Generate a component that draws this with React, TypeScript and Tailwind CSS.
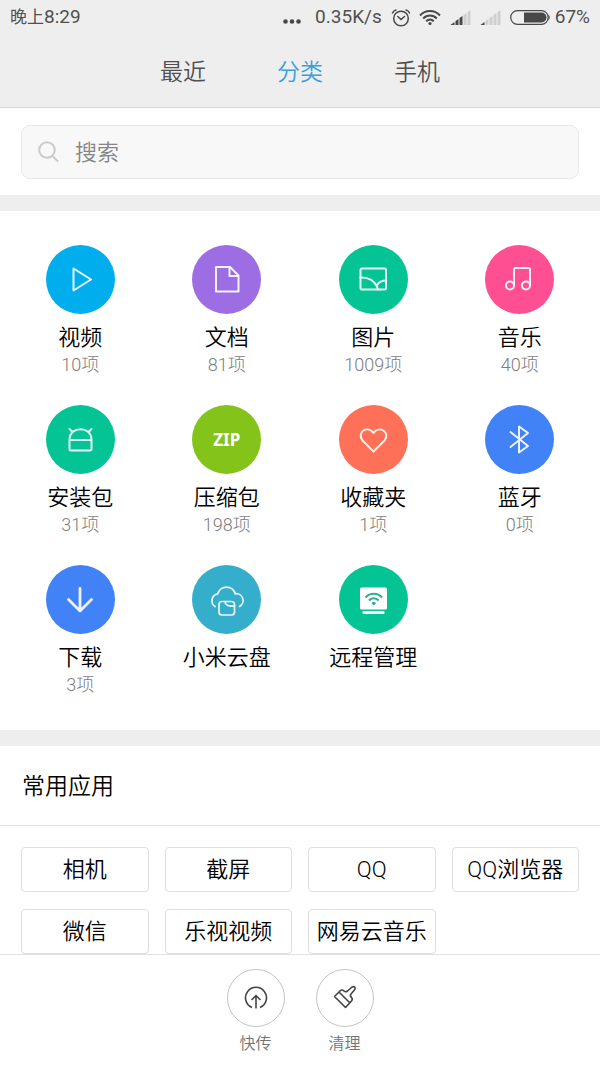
import { useState, type ReactNode } from "react";

type Category = {
  name: string;
  count?: string;
  color: string;
  icon: ReactNode;
};

// every category icon is drawn on the 69x69 disc
const categories: Category[] = [
  {
    name: "视频",
    count: "10项",
    color: "bg-[#00aeee]",
    icon: <path d="M27.500 23.500V45.500L45 34.500Z" />,
  },
  {
    name: "文档",
    count: "81项",
    color: "bg-[#9d6de4]",
    icon: <path d="M24 22H38L46.500 30.500V46.500H24ZM37.500 22V31H46.500" />,
  },
  {
    name: "图片",
    count: "1009项",
    color: "bg-[#04c495]",
    icon: (
      <>
        <rect x="21.500" y="23.500" width="25.500" height="21" rx="1.500" />
        <path d="M21.500 32.500C29 32 36.500 35.500 39 44.500M38 40C40 37 43 35.500 47 35.500" />
      </>
    ),
  },
  {
    name: "音乐",
    count: "40项",
    color: "bg-[#ff4f93]",
    icon: (
      <>
        <circle cx="25" cy="40.500" r="4" />
        <circle cx="41" cy="40.500" r="4" />
        <path d="M29 40.500V24.500Q29 23 30.500 23H43.500Q45 23 45 24.500V40.500" />
      </>
    ),
  },
  {
    name: "安装包",
    count: "31项",
    color: "bg-[#04c495]",
    icon: (
      <path d="M23.500 35C23.500 20.500 45.500 20.500 45.500 35V44Q45.500 45.500 44 45.500H25Q23.500 45.500 23.500 44ZM23.500 35H45.500M23.500 24L26.500 27M45.500 24L42.500 27" />
    ),
  },
  {
    name: "压缩包",
    count: "198项",
    color: "bg-[#84c31a]",
    icon: null,
  },
  {
    name: "收藏夹",
    count: "1项",
    color: "bg-[#ff7058]",
    icon: (
      <path d="M34.500 46.500L23.500 35.500C20.500 32 21.500 27.500 24.500 25.500C28 23.500 32 24.500 34.500 28C37 24.500 41 23.500 44.500 25.500C47.500 27.500 48.500 32 45.500 35.500Z" />
    ),
  },
  {
    name: "蓝牙",
    count: "0项",
    color: "bg-[#4182f6]",
    icon: <path d="M25.500 27L43 41L34 47.500V21.500L43 28L25.500 42" />,
  },
  {
    name: "下载",
    count: "3项",
    color: "bg-[#4182f6]",
    icon: <path strokeWidth="2.800" d="M34 23.500V45.500M22.500 34.500L34 46L45.500 34.500" />,
  },
  {
    name: "小米云盘",
    color: "bg-[#34aecb]",
    icon: (
      <g strokeWidth="1.700">
        <path d="M23 41.500A7 7 0 0 1 25.800 28.800A9 9 0 0 1 43.200 28.800A6.800 6.800 0 0 1 47.500 41.500" />
        <rect x="27" y="36.500" width="15.500" height="13.500" rx="3" />
        <path d="M33 36.500C33 40 36 41.500 42.500 41" />
      </g>
    ),
  },
  {
    name: "远程管理",
    color: "bg-[#04c495]",
    icon: (
      <>
        <rect x="21" y="22.500" width="27" height="22" rx="1.500" fill="white" stroke="none" />
        <rect x="23.500" y="46" width="22" height="3" rx="1" fill="white" stroke="none" />
        <path
          stroke="#1aa583"
          strokeLinecap="butt"
          d="M26.500 32.500C31 27.500 38.500 27.500 43 32.500M30 35.500C32.500 32.500 37 32.500 39.500 35.500"
        />
        <path d="M32.500 38Q34.700 36 37 38L34.700 40.500Z" fill="#1aa583" stroke="none" />
      </>
    ),
  },
];

const apps = ["相机", "截屏", "QQ", "QQ浏览器", "微信", "乐视视频", "网易云音乐"];

const tabs = ["最近", "分类", "手机"];

function Signal({ level }: { level: number }) {
  const bars = [
    "M0 15L4 12V15Z",
    "M5 11L8 9V15H5Z",
    "M9 8L12 6V15H9Z",
    "M13 5L16 3V15H13Z",
    "M17 2L20 0V15H17Z",
  ];
  return (
    <svg width="21" height="15" viewBox="0 0 20 15">
      {bars.map((d, i) => (
        <path key={d} d={d} fill={i < level ? "#484848" : "#cfcfcf"} />
      ))}
    </svg>
  );
}

function StatusBar() {
  return (
    <div className="flex h-[35px] items-center justify-between px-[10px] text-[19px] text-[#505050]">
      <span>
        <span className="text-[17px]">晚上</span>8:29
      </span>
      <div className="flex items-center">
        <svg width="18" height="15" viewBox="0 0 18 15" fill="#484848">
          <circle cx="2.500" cy="11.500" r="2.300" />
          <circle cx="9" cy="11.500" r="2.300" />
          <circle cx="15.500" cy="11.500" r="2.300" />
        </svg>
        <span className="ml-[14px]">0.35K/s</span>
        <svg
          className="ml-[9px]"
          width="20"
          height="18"
          viewBox="0 0 20 18"
          fill="none"
          stroke="#484848"
          strokeWidth="1.500"
          strokeLinecap="round"
        >
          <circle cx="10" cy="9.500" r="7.300" />
          <path d="M1.500 4Q2.500 1.500 5 1M18.500 4Q17.500 1.500 15 1M6.800 7.500L10 10.500L13.500 7.500" />
        </svg>
        <svg
          className="ml-[8px]"
          width="22"
          height="17"
          viewBox="0 0 22 17"
          fill="none"
          stroke="#484848"
          strokeWidth="2"
        >
          <path d="M1 6.500C6.500 0.500 15.500 0.500 21 6.500M4.200 9.500C8 5.500 14 5.500 17.800 9.500M7.200 12.300C9.500 10 12.500 10 14.800 12.300" />
          <circle cx="11" cy="14.500" r="1.600" fill="#484848" stroke="none" />
        </svg>
        <div className="ml-[9px] flex gap-[9px]">
          <Signal level={3} />
          <Signal level={1} />
        </div>
        <svg className="ml-[9px]" width="41" height="15" viewBox="0 0 41 15">
          <rect x="0.700" y="0.700" width="37.500" height="13.600" rx="6.800" fill="none" stroke="#484848" strokeWidth="1.200" />
          <path d="M14 2.500H31.500A5 5 0 0 1 31.500 12.500H14Z" fill="#484848" />
          <path d="M38.500 4.500Q41 7.500 38.500 10.500Z" fill="#484848" />
        </svg>
        <span className="ml-[4px]">67%</span>
      </div>
    </div>
  );
}

function CategoryItem({ item }: { item: Category }) {
  return (
    <button className="flex h-[160px] flex-col items-center">
      <span
        className={`flex size-[69px] items-center justify-center rounded-full ${item.color}`}
      >
        {item.icon ? (
          <svg
            className="size-full"
            viewBox="0 0 69 69"
            fill="none"
            stroke="white"
            strokeOpacity="0.9"
            strokeWidth="2"
            strokeLinejoin="round"
            strokeLinecap="round"
          >
            {item.icon}
          </svg>
        ) : (
          <span className="font-['Noto_Sans',sans-serif] text-[17px] font-bold text-white">
            ZIP
          </span>
        )}
      </span>
      <span className="mt-[9px] text-[22px] leading-[30px] font-[350] text-black">
        {item.name}
      </span>
      {item.count && (
        <span className="text-[18px] leading-[24px] font-light text-[#7c7c7c]">
          {item.count}
        </span>
      )}
    </button>
  );
}

function FooterAction({ label, children }: { label: string; children: ReactNode }) {
  return (
    <button className="flex flex-col items-center">
      <span className="flex size-[58px] items-center justify-center rounded-full border border-[#c4c4c4]">
        <svg
          width="28"
          height="28"
          viewBox="0 0 28 28"
          fill="none"
          stroke="#444444"
          strokeWidth="1.600"
          strokeLinejoin="round"
        >
          {children}
        </svg>
      </span>
      <span className="mt-[5px] text-[16px] leading-[24px] font-[350] text-[#747474]">
        {label}
      </span>
    </button>
  );
}

export default function App() {
  const [tab, setTab] = useState("分类");

  return (
    <div className="flex min-h-screen flex-col bg-white font-[Roboto,'Noto_Sans_CJK_SC',sans-serif]">
      <header className="border-b border-[#d8d8d8] bg-[#eeeeee]">
        <StatusBar />
        <nav className="flex h-[72px] justify-center gap-[71px] pt-[4px]">
          {tabs.map((name) => (
            <button
              key={name}
              onClick={() => setTab(name)}
              className={`text-[23px] font-[350] ${tab === name ? "text-[#3a9edb]" : "text-[#505050]"}`}
            >
              {name}
            </button>
          ))}
        </nav>
      </header>

      <main className="flex-1">
        {/* Search */}
        <div className="px-[21px] pt-[17px] pb-[16px]">
          <label className="flex h-[54px] items-center rounded-[9px] border border-[#e8e8e8] bg-[#f8f8f8] pl-[16px]">
            <svg
              width="21"
              height="22"
              viewBox="0 0 21 22"
              fill="none"
              stroke="#cbcbcb"
              strokeWidth="2"
              strokeLinecap="round"
            >
              <circle cx="9" cy="9" r="7.800" />
              <path d="M14.500 15L19.500 20" />
            </svg>
            <input
              type="text"
              aria-label="搜索"
              placeholder="搜索"
              className="ml-[16px] min-w-0 flex-1 bg-transparent text-[22px] font-[350] outline-none placeholder:text-[#868686]"
            />
          </label>
        </div>

        {/* Categories */}
        <section className="grid grid-cols-4 border-t-16 border-[#eeeeee] px-[7px] pt-[34px] pb-[5px]">
          {categories.map((item) => (
            <CategoryItem key={item.name} item={item} />
          ))}
        </section>

        {/* Common apps */}
        <section className="border-t-16 border-[#eeeeee]">
          <h2 className="flex h-[80px] items-center border-b border-[#e4e4e4] px-[22px] pt-[4px] text-[23px] font-[350] text-black">
            常用应用
          </h2>
          <div className="grid grid-cols-4 gap-x-4 gap-y-[17px] px-[21px] pt-[21px]">
            {apps.map((app) => (
              <button
                key={app}
                className="h-[45px] rounded-[4px] border border-[#dedede] text-[22px] font-[350] whitespace-nowrap text-black"
              >
                {app}
              </button>
            ))}
          </div>
        </section>
      </main>

      <footer className="sticky bottom-0 flex h-[112px] justify-center gap-[31px] border-t border-[#e0e0e0] bg-white pt-[14px]">
        <FooterAction label="快传">
          <path d="M10 23.500A10.500 10.500 0 1 1 18 23.500M14 24.500V11.500M9.500 16L14 11.500L18.500 16" />
        </FooterAction>
        <FooterAction label="清理">
          <path d="M3.500 12.500L9 7Q11 5 13 7Q14.500 8.500 16.500 7L21 3Q23 2 24 3.500Q24.500 5 23 6.500L20 10Q18.500 11.500 20.500 13.500Q22 15 20.500 17L14.500 23.500ZM8 8L19 19" />
        </FooterAction>
      </footer>
    </div>
  );
}
